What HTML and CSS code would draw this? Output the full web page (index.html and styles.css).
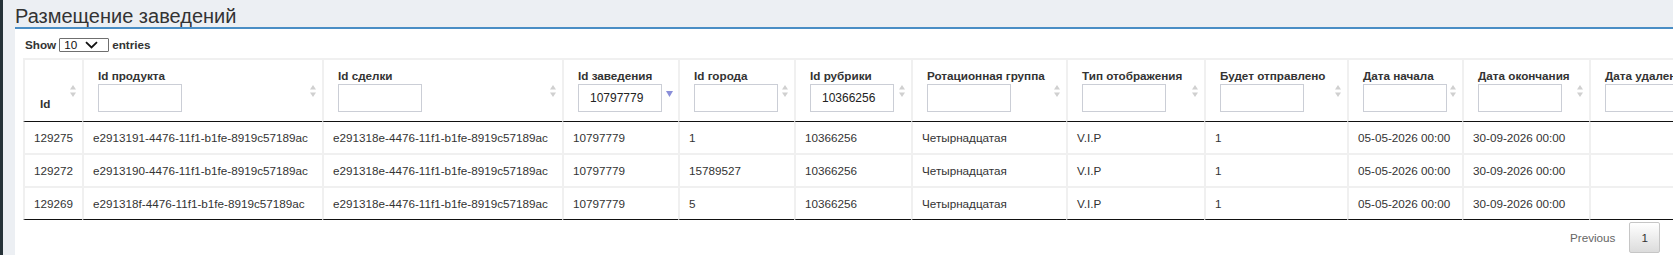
FILE: index.html
```html
<!DOCTYPE html>
<html lang="ru">
<head>
<meta charset="utf-8">
<title>Размещение заведений</title>
<link rel="stylesheet" href="styles.css">
</head>
<body>
<div class="app">
  <div class="sidebar"></div>
  <div class="main">
    <h1 class="title">Размещение заведений</h1>
    <div class="panel">
      <div class="wrapper">
        <div class="length">
          <span>Show</span>
          <span class="select-wrap">
            <select class="select"><option>10</option><option>25</option><option>50</option><option>100</option></select>
            <svg class="chev" width="13" height="8" viewBox="0 0 13 8"><path d="M1 1.2 L6.5 6.4 L12 1.2" fill="none" stroke="#111" stroke-width="1.8"/></svg>
          </span>
          <span>entries</span>
        </div>
        <table class="grid">
          <thead>
            <tr>
              <th class="c-id"><div class="lbl">Id</div><svg class="sort" width="6" height="12" viewBox="0 0 6 12"><path d="M3 0 L6 4.6 L0 4.6Z M0 7.4 L6 7.4 L3 12Z" fill="#d0d0d0"/></svg></th>
              <th><div class="lbl">Id продукта</div><input class="filter" type="text"><svg class="sort" width="6" height="12" viewBox="0 0 6 12"><path d="M3 0 L6 4.6 L0 4.6Z M0 7.4 L6 7.4 L3 12Z" fill="#d0d0d0"/></svg></th>
              <th><div class="lbl">Id сделки</div><input class="filter" type="text"><svg class="sort" width="6" height="12" viewBox="0 0 6 12"><path d="M3 0 L6 4.6 L0 4.6Z M0 7.4 L6 7.4 L3 12Z" fill="#d0d0d0"/></svg></th>
              <th><div class="lbl">Id заведения</div><input class="filter" type="text" value="10797779"><svg class="sort-desc" width="7" height="6" viewBox="0 0 7 6"><path d="M0 0 L7 0 L3.5 6Z" fill="#8a8fd9"/></svg></th>
              <th><div class="lbl">Id города</div><input class="filter" type="text"><svg class="sort" width="6" height="12" viewBox="0 0 6 12"><path d="M3 0 L6 4.6 L0 4.6Z M0 7.4 L6 7.4 L3 12Z" fill="#d0d0d0"/></svg></th>
              <th><div class="lbl">Id рубрики</div><input class="filter" type="text" value="10366256"><svg class="sort" width="6" height="12" viewBox="0 0 6 12"><path d="M3 0 L6 4.6 L0 4.6Z M0 7.4 L6 7.4 L3 12Z" fill="#d0d0d0"/></svg></th>
              <th><div class="lbl">Ротационная группа</div><input class="filter" type="text"><svg class="sort" width="6" height="12" viewBox="0 0 6 12"><path d="M3 0 L6 4.6 L0 4.6Z M0 7.4 L6 7.4 L3 12Z" fill="#d0d0d0"/></svg></th>
              <th><div class="lbl">Тип отображения</div><input class="filter" type="text"><svg class="sort" width="6" height="12" viewBox="0 0 6 12"><path d="M3 0 L6 4.6 L0 4.6Z M0 7.4 L6 7.4 L3 12Z" fill="#d0d0d0"/></svg></th>
              <th><div class="lbl">Будет отправлено</div><input class="filter" type="text"><svg class="sort" width="6" height="12" viewBox="0 0 6 12"><path d="M3 0 L6 4.6 L0 4.6Z M0 7.4 L6 7.4 L3 12Z" fill="#d0d0d0"/></svg></th>
              <th><div class="lbl">Дата начала</div><input class="filter" type="text"><svg class="sort" width="6" height="12" viewBox="0 0 6 12"><path d="M3 0 L6 4.6 L0 4.6Z M0 7.4 L6 7.4 L3 12Z" fill="#d0d0d0"/></svg></th>
              <th><div class="lbl">Дата окончания</div><input class="filter" type="text"><svg class="sort" width="6" height="12" viewBox="0 0 6 12"><path d="M3 0 L6 4.6 L0 4.6Z M0 7.4 L6 7.4 L3 12Z" fill="#d0d0d0"/></svg></th>
              <th><div class="lbl">Дата удаления</div><input class="filter" type="text"><svg class="sort" width="6" height="12" viewBox="0 0 6 12"><path d="M3 0 L6 4.6 L0 4.6Z M0 7.4 L6 7.4 L3 12Z" fill="#d0d0d0"/></svg></th>
            </tr>
          </thead>
          <tbody>
            <tr>
              <td>129275</td><td>e2913191-4476-11f1-b1fe-8919c57189ac</td><td>e291318e-4476-11f1-b1fe-8919c57189ac</td><td>10797779</td><td>1</td><td>10366256</td><td>Четырнадцатая</td><td>V.I.P</td><td>1</td><td>05-05-2026 00:00</td><td>30-09-2026 00:00</td><td></td>
            </tr>
            <tr>
              <td>129272</td><td>e2913190-4476-11f1-b1fe-8919c57189ac</td><td>e291318e-4476-11f1-b1fe-8919c57189ac</td><td>10797779</td><td>15789527</td><td>10366256</td><td>Четырнадцатая</td><td>V.I.P</td><td>1</td><td>05-05-2026 00:00</td><td>30-09-2026 00:00</td><td></td>
            </tr>
            <tr>
              <td>129269</td><td>e291318f-4476-11f1-b1fe-8919c57189ac</td><td>e291318e-4476-11f1-b1fe-8919c57189ac</td><td>10797779</td><td>5</td><td>10366256</td><td>Четырнадцатая</td><td>V.I.P</td><td>1</td><td>05-05-2026 00:00</td><td>30-09-2026 00:00</td><td></td>
            </tr>
          </tbody>
        </table>
        <div class="paginate">
          <span class="pbtn disabled">Previous</span>
          <span class="pbtn current">1</span>
          <span class="pbtn disabled">Next</span>
        </div>
      </div>
    </div>
  </div>
</div>
</body>
</html>
```
FILE: styles.css
```css
html, body {
  margin: 0;
  padding: 0;
  height: 255px;
  overflow: hidden;
}
body {
  background: #eceff3;
  font-family: "Liberation Sans", Arial, sans-serif;
  color: #333;
}
.app {
  display: flex;
  height: 255px;
}
.sidebar {
  width: 3px;
  flex: none;
  background: #263238;
}
.main {
  flex: 1;
  min-width: 0;
  padding-left: 12px;
  display: flex;
  flex-direction: column;
}
.title {
  margin: 0;
  padding-top: 5px;
  font-weight: normal;
  font-size: 20px;
  line-height: 22px;
  color: #333;
  border-bottom: 2px solid #4a8ec5;
}
.panel {
  flex: 1;
  background: #fff;
  overflow: hidden;
  padding-left: 8px;
}
.wrapper {
  width: 1687px;
}
.length {
  padding: 8px 0 0 2px;
  height: 15px;
  display: flex;
  align-items: center;
  gap: 3px;
  font-size: 11.7px;
  font-weight: bold;
  line-height: 15px;
}
.select-wrap {
  position: relative;
  display: inline-flex;
}
.select {
  appearance: none;
  -webkit-appearance: none;
  box-sizing: border-box;
  width: 50px;
  height: 14px;
  margin: 0;
  padding: 0 0 0 4px;
  border: 1px solid #6f6f6f;
  border-radius: 1px;
  background: #fff;
  font-family: "Liberation Sans", Arial, sans-serif;
  font-size: 11.7px;
  line-height: 12px;
  color: #111;
}
.chev {
  position: absolute;
  right: 11px;
  top: 3px;
  pointer-events: none;
}
.grid {
  margin-top: 6px;
  width: 1687px;
  table-layout: fixed;
  border-collapse: separate;
  border-spacing: 0;
  font-size: 11.7px;
}
.grid th,
.grid td {
  box-sizing: border-box;
  border-left: 2px solid #f0f0f0;
  text-align: left;
  white-space: nowrap;
  overflow: hidden;
}
.grid th {
  position: relative;
  border-top: 2px solid #f0f0f0;
  border-bottom: 1px solid #111;
  padding: 8px 16px 9px 14px;
  vertical-align: bottom;
  font-weight: bold;
  line-height: 16px;
}
.grid th:nth-child(1) { width: 59px; padding-left: 15px; }
.grid th:nth-child(2) { width: 240px; }
.grid th:nth-child(3) { width: 240px; }
.grid th:nth-child(4) { width: 116px; }
.grid th:nth-child(5) { width: 116px; }
.grid th:nth-child(6) { width: 117px; }
.grid th:nth-child(7) { width: 155px; }
.grid th:nth-child(8) { width: 138px; }
.grid th:nth-child(9) { width: 143px; }
.grid th:nth-child(10) { width: 115px; }
.grid th:nth-child(11) { width: 127px; }
.grid th:nth-child(12) { width: 121px; }
.lbl {
  height: 16px;
}
.filter {
  display: block;
  box-sizing: border-box;
  width: 84px;
  height: 28px;
  margin: 0;
  padding: 0 0 0 11px;
  border: 1px solid #cbced6;
  border-radius: 0;
  background: #fff;
  font-family: "Liberation Sans", Arial, sans-serif;
  font-size: 12px;
  font-weight: normal;
  color: #222;
  outline: none;
}
.sort {
  position: absolute;
  right: 6px;
  top: 50%;
  margin-top: -6px;
}
.sort-desc {
  position: absolute;
  right: 5px;
  top: 50%;
}
.grid td {
  padding: 7px 9px;
  line-height: 17px;
  height: 31px;
}
.grid tbody tr + tr td {
  border-top: 2px solid #f0f0f0;
}
.grid tbody tr:last-child td {
  border-bottom: 1px solid #111;
}
.paginate {
  display: flex;
  justify-content: flex-end;
  margin-top: 2px;
  font-size: 11.7px;
}
.pbtn {
  box-sizing: border-box;
  margin-left: 2px;
  padding: 6px 11px;
  line-height: 17px;
  border: 1px solid transparent;
  border-radius: 2px;
  color: #333;
}
.pbtn.disabled {
  color: #666;
}
.pbtn.current {
  border-color: #c6c6c6;
  background: linear-gradient(to bottom, #ffffff 0%, #dcdcdc 100%);
}
```
